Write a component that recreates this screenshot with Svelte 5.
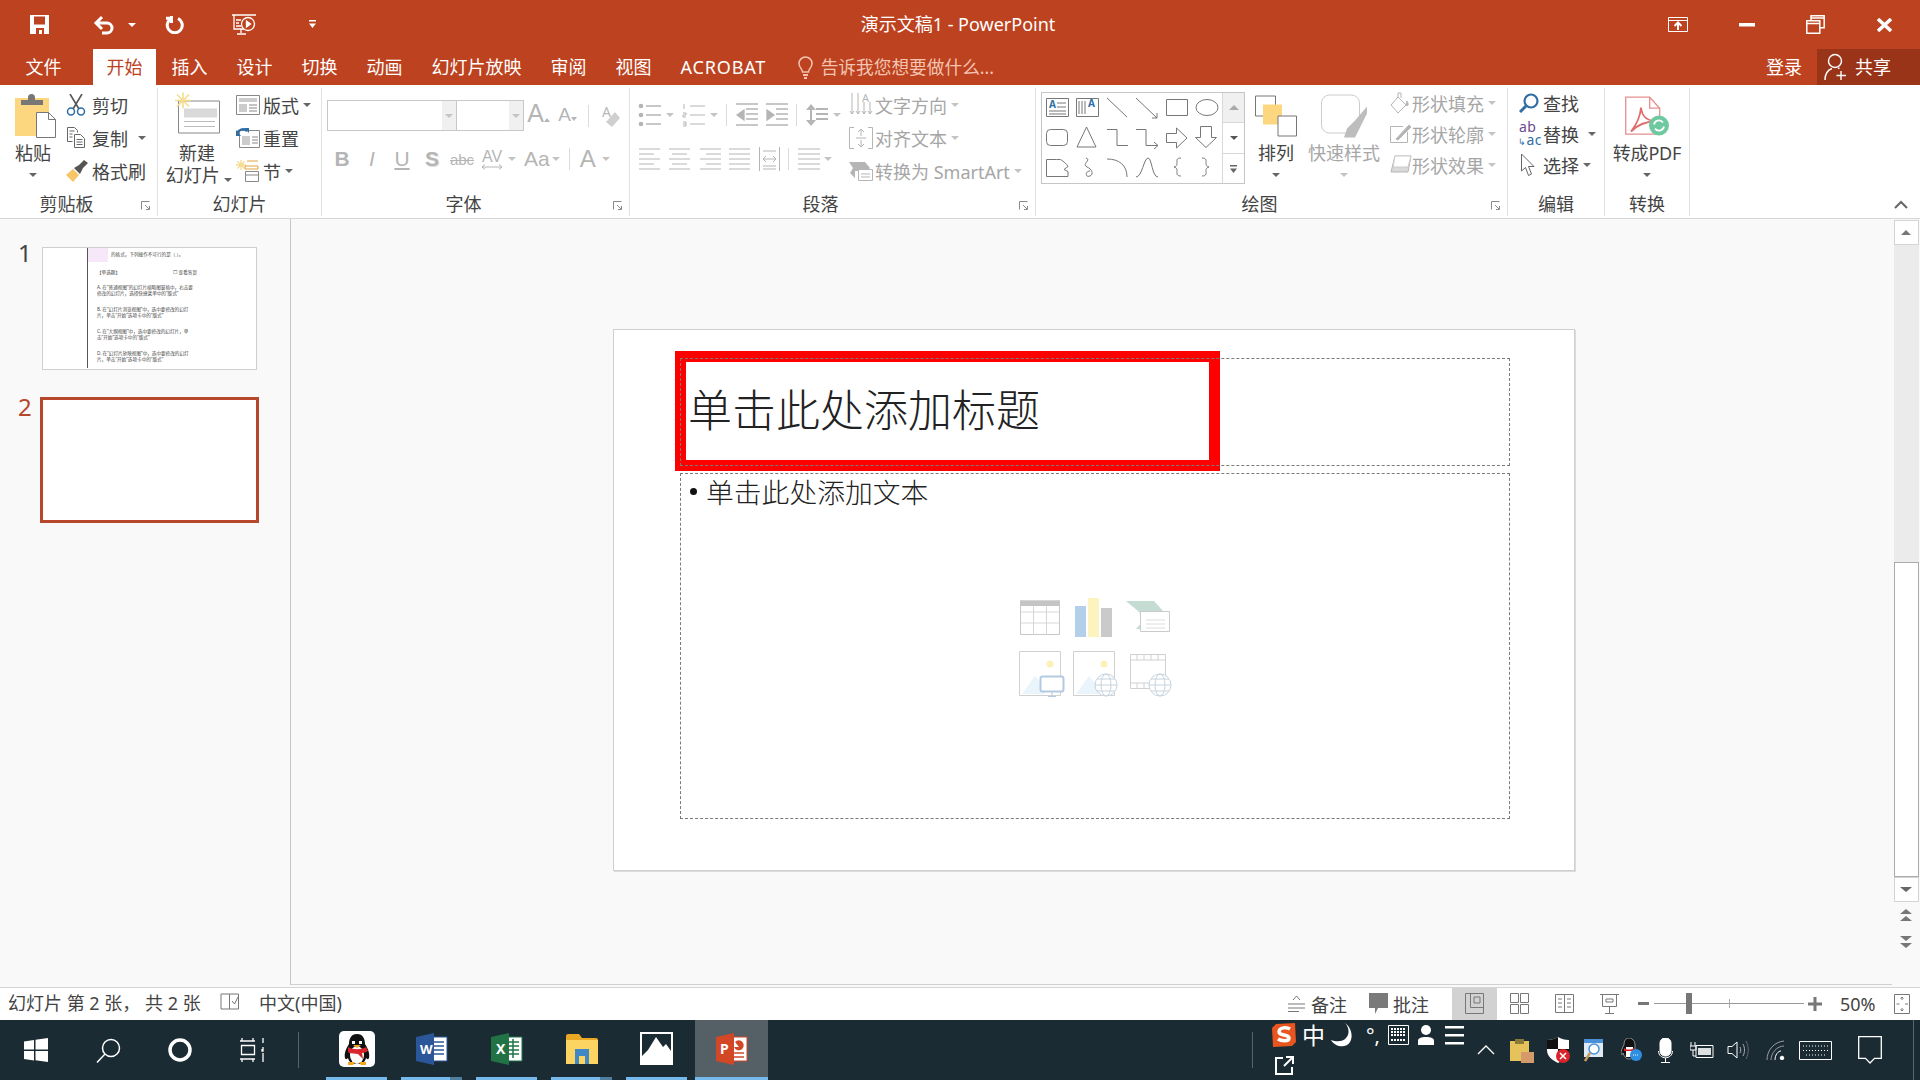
<script>
	const tabs = ['插入', '设计', '切换', '动画', '幻灯片放映', '审阅', '视图', 'ACROBAT'];
	const answers = [
		['A. 在“普通视图”的幻灯片缩略图窗格中，右击要', '修改的幻灯片，选择快捷菜单中的“版式”'],
		['B. 在“幻灯片浏览视图”中，选中要修改的幻灯', '片，单击“开始”选项卡中的“版式”'],
		['C. 在“大纲视图”中，选中要修改的幻灯片，单', '击“开始”选项卡中的“版式”'],
		['D. 在“幻灯片放映视图”中，选中要修改的幻灯', '片，单击“开始”选项卡中的“版式”']
	];
</script>

{#snippet launcher()}
	<svg class="launcher" width="24" height="12" viewBox="0 0 24 12" fill="none" stroke="#8a8a8a">
		<path d="M8.5 9.5v-8h8M12 5l4 4M13 9.5h3.5V6" />
	</svg>
{/snippet}

<div class="app">
	<header class="titlebar">
		<div class="qat">
			<svg width="19" height="19" viewBox="0 0 19 19"><path d="M0 0h19v19H0z" fill="#fff" /><path d="M4 1.500h11v8H4zM6 13h8v6h-2v-4H9v4H6z" fill="#bd421f" /></svg>
			<svg width="21" height="20" viewBox="0 0 21 20" fill="none" stroke="#fff" stroke-width="3"><path d="M9 2 3 8l6 6M4 8h10a5 5 0 0 1 0 10H9" /></svg>
			<i class="dd white"></i>
			<svg width="19" height="19" viewBox="0 0 19 19" fill="none" stroke="#fff" stroke-width="3"><path d="M6.500 3.500a7.500 7.500 0 1 0 6.500 0M6.500 1v7M1 3.200h6" /></svg>
			<svg width="24" height="21" viewBox="0 0 24 21" fill="none" stroke="#fff" stroke-width="1.300"><path d="M0 1h24M2 1v14h10M9 15v4M5 20h9M4 6h5M4 9h3M4 12h5" /><circle cx="16" cy="10" r="6.500" /><path d="M14.500 7v6l4-3z" fill="#fff" /></svg>
			<svg width="10" height="9" viewBox="0 0 10 9" fill="#fff"><path d="M1 0h7v1.500H1zM1 3.500h7L4.500 8z" /></svg>
		</div>
		<div class="doc-title">演示文稿1 - PowerPoint</div>
		<div class="win-btns">
			<svg width="20" height="15" viewBox="0 0 20 15" fill="none" stroke="#fff"><path d="M.5.500h19v14H.5zM.5 3.500h19" /><path d="M10 13V6M6.500 9 10 5.500 13.500 9" stroke-width="2" /></svg>
			<svg width="16" height="4" viewBox="0 0 16 4"><path d="M0 0h16v3.500H0z" fill="#fff" /></svg>
			<svg width="19" height="19" viewBox="0 0 19 19" fill="none" stroke="#fff" stroke-width="1.500"><path d="M.8 5.800h13v12.500H.8zM.8 8.500h13M5 5.500V.8h13.200v12H14M5 3h13" /></svg>
			<svg width="15" height="14" viewBox="0 0 15 14" fill="none" stroke="#fff" stroke-width="3.400"><path d="m1 1 13 12M14 1 1 13" /></svg>
		</div>
	</header>

	<nav class="tabbar">
		<span class="tab file">文件</span>
		<span class="tab active">开始</span>
		{#each tabs as t}
			<span class="tab" class:latin={t === 'ACROBAT'}>{t}</span>
		{/each}
		<svg class="bulb" width="15" height="23" viewBox="0 0 15 23" fill="none" stroke="#f3c4b1" stroke-width="1.500"><path d="M4.500 16c0-3-3.500-4.500-3.500-8.500a6.500 6.500 0 0 1 13 0c0 4-3.500 5.500-3.500 8.500z" /><path d="M5 19h5M6 22h3" stroke-width="2" /></svg>
		<span class="tell">告诉我您想要做什么...</span>
		<span class="login">登录</span>
		<span class="share">
			<svg width="24" height="28" viewBox="0 0 24 28" fill="none" stroke="#fff" stroke-width="1.400"><circle cx="11" cy="8" r="6.500" /><path d="M1 27c0-6 3-10 7-11.500M14 15l1.500.500M17 18v9M12.500 22.500H22" /></svg>
			共享
		</span>
	</nav>

	<section class="ribbon">
		<div class="group g-clip">
			<div class="body">
				<div class="big w66">
					<svg class="paste" width="41" height="44" viewBox="0 0 41 44"><path d="M0 4h34v38H0z" fill="#fcd77f" /><path d="M6 11V6h7V3.500a3.500 3.500 0 0 1 7 0V6h8v5z" fill="#777" /><path d="M21.500 18.500h12l7 7v18h-19z" fill="#fff" stroke="#777" /><path d="M33.500 18.500v7h7" fill="none" stroke="#777" /></svg>
					<span class="big-label">粘贴</span>
					<span class="big-dd"><i class="dd"></i></span>
				</div>
				<div class="rows">
					<div class="row">
						<svg width="20" height="22" viewBox="0 0 20 22" fill="none"><path d="M4 0 13 15M16 0 7 15" stroke="#555" stroke-width="1.600" /><circle cx="5" cy="17.500" r="3.500" stroke="#2f6ea5" stroke-width="1.500" /><circle cx="15" cy="17.500" r="3.500" stroke="#2f6ea5" stroke-width="1.500" /></svg>
						<span>剪切</span>
					</div>
					<div class="row">
						<svg width="20" height="21" viewBox="0 0 20 21" fill="none" stroke="#666"><path d="M1.500.500h7l3 3v2M1.500.500v14h5M3.500 4h5M3.500 7h3M3.500 10h3" /><path d="M8.500 7.500h6l4 4v9h-10zM10.500 12.500h6M10.500 15h6M10.500 17.500h6" /></svg>
						<span>复制</span><i class="dd gap10"></i>
					</div>
					<div class="row">
						<svg width="22" height="22" viewBox="0 0 22 22"><path d="M7 9l6 6-6 7-7-7z" fill="#f6c667" /><path d="M8 8l5-3 5-5 4 3-5 5-3 6z" fill="#555" /></svg>
						<span>格式刷</span>
					</div>
				</div>
			</div>
			<div class="glabel"><span>剪贴板</span>{@render launcher()}</div>
		</div>

		<div class="group g-slides">
			<div class="body">
				<div class="big w78">
					<svg class="newslide" width="46" height="41" viewBox="0 0 46 41"><path d="M4.500 8.500h41v32h-41z" fill="#fff" stroke="#888" /><path d="M10 16h33v9H10z" fill="#d9d9d9" /><path d="M10 29h31M10 34h31" stroke="#bbb" /><path d="M9 0v16M1 8h16M3 2l12 12M15 2 3 14" stroke="#f6dc8e" stroke-width="1.600" /></svg>
					<span class="big-label">新建</span>
					<span class="big-label second">幻灯片 <i class="dd"></i></span>
				</div>
				<div class="rows">
					<div class="row">
						<svg width="24" height="20" viewBox="0 0 24 20" fill="none" stroke="#888"><path d="M.5.500h23v19H.5z" /><path d="M3 3h18v4H3zM3 9h8v8H3z" fill="#ccc" stroke="none" /><path d="M13 10h8M13 13h8M13 16h8" /></svg>
						<span>版式</span><i class="dd gap4"></i>
					</div>
					<div class="row">
						<svg width="24" height="21" viewBox="0 0 24 21" fill="none" stroke="#888"><path d="M3.500 3.500h20v17h-20z" fill="#fff" /><path d="M6 9h8v9H6z" fill="#ccc" stroke="none" /><path d="M16 10h6M16 13h6M16 16h6" /><path d="M1 7a6 6 0 0 1 10-3" stroke="#2f6ea5" stroke-width="2.500" /><path d="M0 3l5 6H0zM8 1h5v5z" fill="#2f6ea5" stroke="none" /></svg>
						<span>重置</span>
					</div>
					<div class="row">
						<svg width="24" height="22" viewBox="0 0 24 22" fill="none"><path d="M5 0v10M0 5h10M1.500 1.500l7 7M8.500 1.500l-7 7" stroke="#f6dc8e" stroke-width="1.300" /><path d="M11 1h11M9 6h13v3H9z" stroke="#e2a23a" /><path d="M9.500 11.500h13v10h-13zM9.500 15h13" stroke="#888" /></svg>
						<span>节</span><i class="dd gap4"></i>
					</div>
				</div>
			</div>
			<div class="glabel"><span>幻灯片</span></div>
		</div>

		<div class="group g-font off">
			<div class="body column">
				<div class="font-row">
					<div class="combo name"><span class="drop"><i class="dd off"></i></span></div>
					<div class="combo size"><span class="drop"><i class="dd off"></i></span></div>
					<span class="fbtn grow">A<i class="up"></i></span>
					<span class="fbtn shrink">A<i class="down"></i></span>
					<span class="vsep"></span>
					<svg class="clear" width="20" height="24" viewBox="0 0 20 24"><text x="1" y="13" font-size="14" fill="#b8b8b8" font-family="Noto Sans">A</text><path d="M14 8l5 6-8 9-6-5z" fill="#cfcfcf" /></svg>
				</div>
				<div class="style-row">
					<b>B</b><em>I</em><u>U</u><b class="shadowed">S</b><s>abc</s>
					<span class="av">AV<svg width="22" height="6" viewBox="0 0 22 6" fill="none" stroke="#b5b5b5"><path d="M1 3h20M4 .500 1 3l3 2.500M18 .500 21 3l-3 2.500" /></svg></span>
					<i class="dd off"></i>
					<span class="aa">Aa</span><i class="dd off"></i>
					<span class="vsep"></span>
					<span class="color-a">A</span><i class="dd off"></i>
				</div>
			</div>
			<div class="glabel"><span>字体</span>{@render launcher()}</div>
		</div>

		<div class="group g-para off">
			<div class="body">
				<div class="para-left">
					<div class="para-row one">
						<svg width="23" height="24" viewBox="0 0 23 24" fill="none" stroke="#b5b5b5" stroke-width="1.500"><path d="M8 3h15M8 12h15M8 21h15" /><circle cx="3" cy="3" r="1.600" fill="#b5b5b5" /><circle cx="3" cy="12" r="1.600" fill="#b5b5b5" /><circle cx="3" cy="21" r="1.600" fill="#b5b5b5" /></svg>
						<i class="dd off"></i>
						<svg width="23" height="24" viewBox="0 0 23 24" fill="none" stroke="#b5b5b5" stroke-width="1.500"><path d="M8 3h15M8 12h15M8 21h15M2 1v5M1 10h3v2H1v2h3M1 19h3v4H1M1 21h3" stroke-width="1" /></svg>
						<i class="dd off"></i>
						<span class="vsep"></span>
						<svg width="22" height="24" viewBox="0 0 22 24" fill="none" stroke="#b5b5b5" stroke-width="1.300"><path d="M0 1h22M10 6h12M10 11h12M10 16h12M0 22h22" /><path d="M8 7v10L1 12z" fill="#b5b5b5" /></svg>
						<svg width="22" height="24" viewBox="0 0 22 24" fill="none" stroke="#b5b5b5" stroke-width="1.300"><path d="M0 1h22M10 6h12M10 11h12M10 16h12M0 22h22" /><path d="M1 7v10l7-5z" fill="#b5b5b5" /></svg>
						<span class="vsep"></span>
						<svg width="22" height="24" viewBox="0 0 22 24" fill="none" stroke="#b5b5b5" stroke-width="1.300"><path d="M10 6h12M10 11h12M10 16h12M5 3v18" stroke-width="2" /><path d="M0 7l5-6 5 6zM0 17l5 6 5-6z" fill="#b5b5b5" stroke="none" /></svg>
						<i class="dd off"></i>
					</div>
					<div class="para-row two">
						<svg width="21" height="22" viewBox="0 0 21 22" stroke="#b5b5b5"><path d="M0 1h21M0 6h15M0 11h21M0 16h15M0 21h21" /></svg>
						<svg width="21" height="22" viewBox="0 0 21 22" stroke="#b5b5b5"><path d="M0 1h21M3 6h15M0 11h21M3 16h15M0 21h21" /></svg>
						<svg width="21" height="22" viewBox="0 0 21 22" stroke="#b5b5b5"><path d="M0 1h21M6 6h15M0 11h21M6 16h15M0 21h21" /></svg>
						<svg width="21" height="22" viewBox="0 0 21 22" stroke="#b5b5b5"><path d="M0 1h21M0 6h21M0 11h21M0 16h21M0 21h21" /></svg>
						<svg width="21" height="24" viewBox="0 0 21 24" fill="none" stroke="#b5b5b5"><path d="M.500 0v24M20.500 0v24M4 12h13M7 9l-3 3 3 3M14 9l3 3-3 3M4 4h13M4 19h13M4 22h13" /></svg>
						<span class="vsep"></span>
						<svg width="22" height="22" viewBox="0 0 22 22" stroke="#b5b5b5"><path d="M0 1h22M0 6h22M0 11h22M0 16h22M0 21h22" /></svg>
						<i class="dd off"></i>
					</div>
				</div>
				<div class="rows para-right">
					<div class="row dim">
						<svg width="24" height="26" viewBox="0 0 24 26" fill="none" stroke="#b5b5b5"><path d="M3 1v21M9 1v21M15 10v12M21 10v12M1 19l2 3 2-3M7 19l2 3 2-3M13 19l2 3 2-3M19 19l2 3 2-3" /><text x="13" y="10" font-size="11" fill="#b5b5b5" stroke="none" font-family="Noto Sans">A</text></svg>
						<span>文字方向</span><i class="dd off gap4"></i>
					</div>
					<div class="row dim">
						<svg width="24" height="22" viewBox="0 0 24 22" fill="none" stroke="#b5b5b5"><path d="M5 .500H.5v21H5M19 .500h4.500v21H19M12 2v7M9 5l3-3 3 3M12 20v-7M9 17l3 3 3-3M7 11h10" /></svg>
						<span>对齐文本</span><i class="dd off gap4"></i>
					</div>
					<div class="row dim">
						<svg width="24" height="20" viewBox="0 0 24 20"><path d="M0 1h16l5 6-3 3H6v7L1 12l3-5z" fill="#b5b5b5" /><path d="M9.500 8.500h14v11h-14zM12 13h9M12 16h9" fill="#fff" stroke="#b5b5b5" /></svg>
						<span>转换为 SmartArt</span><i class="dd off gap4"></i>
					</div>
				</div>
			</div>
			<div class="glabel"><span>段落</span>{@render launcher()}</div>
		</div>

		<div class="group g-draw">
			<div class="body">
				<div class="gallery">
					<svg width="180" height="90" viewBox="0 0 180 90" fill="none" stroke="#777">
						<path d="M4.500 5.500h22v18h-22zM15 10h9M15 14h9M7 18h17M7 21h17" />
						<text x="7" y="15" font-size="10" font-weight="700" fill="#2f6ea5" stroke="none" font-family="Noto Sans">A</text>
						<path d="M34.500 5.500h22v18h-22zM37 8v13M40 8v13M43 8v13" />
						<text x="46" y="14" font-size="10" font-weight="700" fill="#2f6ea5" stroke="none" font-family="Noto Sans">A</text>
						<path d="m65 5 20 19M94 5l21 20M115 20v5h-5" />
						<path d="M124.500 6.500h21v16h-21z" />
						<ellipse cx="165" cy="14.500" rx="11" ry="8" />
						<rect x="4.500" y="36.500" width="21" height="16" rx="4" />
						<path d="M44.500 34 54 54H35zM65 36.500h10v16h11M94 36.500h10v16h12M112 49l4 3.500-4 3.500" />
						<path d="M124.500 40.500h10V35l10.500 10-10.500 10v-5.500h-10zM158.500 33.500h11v11h5L164 54.500 153.500 44.500h5z" />
						<path d="M4.500 66.500h10l4 0c3 2 6 4 7.500 7l-4 3 4 2v5h-21.500zM44 65c6 2-5 6 1 9 5 2 7 7 3 9-5 2-5-5 0-5" />
						<path d="M65 66c12 0 20 6 20 18M94 84c6 0 8-19 12-19s4 19 10 19" />
						<path d="M139 65c-5 0-4 3-4 5s0 3-3 4c3 1 3 2 3 4s-1 5 4 5M160 65c5 0 4 3 4 5s0 3 3 4c-3 1-3 2-3 4s1 5-4 5" />
					</svg>
					<div class="gal-scroll">
						<span class="top"><i class="tri-up"></i></span>
						<span><i class="dd dark"></i></span>
						<span class="more"><svg width="9" height="9" viewBox="0 0 9 9" fill="#666"><path d="M1 0h7v1.500H1zM1 3.500h7L4.500 8z" /></svg></span>
					</div>
				</div>
				<div class="big w62">
					<svg width="42" height="41" viewBox="0 0 42 41"><path d="M.5.500h20v20H.5z" fill="#fff" stroke="#777" /><path d="M8 9h19v20H8z" fill="#fcd77f" /><path d="M23 20.500h18.500v20H23z" fill="#fff" stroke="#777" /></svg>
					<span class="big-label">排列</span>
					<span class="big-dd"><i class="dd"></i></span>
				</div>
				<div class="big w74 dim">
					<svg width="46" height="43" viewBox="0 0 46 43"><rect x=".5" y=".5" width="38" height="38" rx="8" fill="#fff" stroke="#ccc" /><path d="M46 12 34 26l-8 8-3 9h11l5-10 7-14z" fill="#bdbdbd" /></svg>
					<span class="big-label">快速样式</span>
					<span class="big-dd"><i class="dd off"></i></span>
				</div>
				<div class="rows shape-rows">
					<div class="row dim">
						<svg width="19" height="22" viewBox="0 0 19 22" fill="none" stroke="#b5b5b5"><path d="M8 5 1 13l7 8 8-8zM8 5V1h3v5" /><path d="M17 9c1 2 2 4 0 5-1-1-1-3 0-5z" fill="#b5b5b5" /></svg>
						<span>形状填充</span><i class="dd off gap4"></i>
					</div>
					<div class="row dim">
						<svg width="22" height="21" viewBox="0 0 22 21" fill="none" stroke="#b5b5b5"><path d="M13 3.500H.5v16h17V9" /><path d="M6 16 19 2l2 2L8 17z" fill="#b5b5b5" /></svg>
						<span>形状轮廓</span><i class="dd off gap4"></i>
					</div>
					<div class="row dim">
						<svg width="22" height="21" viewBox="0 0 22 21"><path d="M5 2h16l-3 16H1z" fill="#d9d9d9" stroke="#b5b5b5" /><path d="M5 2h16l-3 11H3z" fill="#fff" stroke="#ccc" /></svg>
						<span>形状效果</span><i class="dd off gap4"></i>
					</div>
				</div>
			</div>
			<div class="glabel"><span>绘图</span>{@render launcher()}</div>
		</div>

		<div class="group g-edit">
			<div class="body">
				<div class="rows">
					<div class="row">
						<svg width="20" height="20" viewBox="0 0 20 20" fill="none" stroke="#2f6ea5"><circle cx="12" cy="8" r="6.500" stroke-width="2.200" /><path d="M7 13 1 19" stroke-width="3" /></svg>
						<span>查找</span>
					</div>
					<div class="row">
						<span class="abac"><span class="ab">ab</span><span class="ac"><em>↳</em>ac</span></span>
						<span>替换</span><i class="dd gap9"></i>
					</div>
					<div class="row">
						<svg width="16" height="24" viewBox="0 0 16 24" fill="#fff" stroke="#666"><path d="M2.500 1v17l4-3.500 3 8 3-1.500-3-7.500H15z" /></svg>
						<span>选择</span><i class="dd gap4"></i>
					</div>
				</div>
			</div>
			<div class="glabel center"><span>编辑</span></div>
		</div>

		<div class="group g-conv">
			<div class="body">
				<div class="big w84">
					<svg width="44" height="39" viewBox="0 0 44 39" fill="none"><path d="M.7.700h24l10 11v26H.7z" fill="#fff" stroke="#e58f8f" stroke-width="1.300" /><path d="M24.700.700v11h10" stroke="#e58f8f" stroke-width="1.300" /><path d="M16 11c1 8 4 12 14 14-8 0-16 2-24 10 4-5 9-12 10-24z" stroke="#e06c6c" stroke-width="1.800" /><circle cx="34" cy="29" r="10" fill="#6fc9a0" /><path d="M29 28a5 5 0 0 1 9-2M39 30a5 5 0 0 1-9 2" stroke="#fff" stroke-width="1.700" /></svg>
					<span class="big-label pdf">转成PDF</span>
					<span class="big-dd"><i class="dd"></i></span>
				</div>
			</div>
			<div class="glabel center"><span>转换</span></div>
		</div>

		<svg class="collapse" width="14" height="9" viewBox="0 0 14 9" fill="none" stroke="#666" stroke-width="2"><path d="m1 8 6-6 6 6" /></svg>
	</section>

	<main class="workspace">
		<aside class="thumbs">
			<div class="thumb-row">
				<span class="num">1</span>
				<div class="thumb first">
					<div class="thumb-left"></div>
					<div class="thumb-page">
						<div class="q-head"><span class="pink"></span>的格式，下列操作不可行的是（ ）。</div>
						<div class="q-type"><span>【单选题】</span><span>☐ 查看答案</span></div>
						{#each answers as a}
							<p>{a[0]}<br />{a[1]}</p>
						{/each}
					</div>
				</div>
			</div>
			<div class="thumb-row second">
				<span class="num current">2</span>
				<div class="thumb selected"></div>
			</div>
		</aside>

		<div class="editor">
			<div class="slide">
				<div class="red-frame"></div>
				<div class="ph title-ph"><span>单击此处添加标题</span></div>
				<div class="ph body-ph"><span class="bullet"></span>单击此处添加文本</div>
				<svg class="ph-icons" width="156" height="100" viewBox="0 0 156 100" fill="none">
					<path d="M1 3h40v6H1z" fill="#c4c4c4" />
					<path d="M1.500 3.500h39v34h-39zM1.500 15h39M1.500 26h39M14.500 9v28M27.500 9v28" stroke="#d6d6d6" />
					<path d="M1.500 3.500v34h39v-34" stroke="#c8c8c8" />
					<path d="M56 9h11v31H56z" fill="#b4cfe9" /><path d="M69 1h11v39H69z" fill="#fdf3be" /><path d="M82 11h11v29H82z" fill="#cacaca" />
					<path d="M107 4h28l9 10-9 10h-10v8h-8l9-10-7-8z" fill="#c4dcd2" />
					<path d="M121.500 14.500h29v20h-29z" fill="#fff" stroke="#cacaca" />
					<path d="M127 23h19M127 27h19M127 31h19" stroke="#dcdcdc" />
					<path d="M.5 54.500h41v44H.5zM54.500 54.500h41v44h-41z" stroke="#d0d0d0" />
					<circle cx="31" cy="67" r="3.500" fill="#fdf0b8" /><circle cx="85" cy="67" r="3.500" fill="#fdf0b8" />
					<path d="M3 97l13-18 10 12v6zM57 97l13-18 10 12v6z" fill="#e9f5fb" />
					<rect x="21.500" y="79.500" width="23" height="15" rx="2" fill="#fff" stroke="#b4c9e2" stroke-width="2" />
					<path d="M33 95v4M29 99.500h8" stroke="#b4c9e2" />
					<circle cx="87" cy="88" r="11" fill="#fff" stroke="#c6d4de" /><ellipse cx="87" cy="88" rx="5" ry="11" stroke="#c6d4de" /><path d="M76 88h22M78 82h18M78 94h18" stroke="#c6d4de" />
					<path d="M111.500 57.500h35v34h-35zM111.500 63h35M111.500 86h35M118 57.500V63M125 57.500V63M132 57.500V63M139 57.500V63M118 86v6M125 86v6" stroke="#d0d0d0" />
					<circle cx="141" cy="88" r="11" fill="#fff" stroke="#c6d4de" /><ellipse cx="141" cy="88" rx="5" ry="11" stroke="#c6d4de" /><path d="M130 88h22M132 82h18M132 94h18" stroke="#c6d4de" />
				</svg>
			</div>
		</div>

		<div class="vscroll">
			<span class="sbtn"><i class="tri-up"></i></span>
			<span class="track"></span>
			<span class="sthumb"></span>
			<span class="sbtn down"><i class="dd big-tri"></i></span>
			<svg class="page" width="14" height="14" viewBox="0 0 14 14" fill="#777"><path d="M7 0l6 5H1zM7 7l6 5H1z" /></svg>
			<svg class="page" width="14" height="14" viewBox="0 0 14 14" fill="#777"><path d="M1 1h12L7 6zM1 8h12l-6 5z" /></svg>
		</div>
	</main>

	<footer class="statusbar">
		<span class="pos">幻灯片 第 2 张， 共 2 张</span>
		<svg class="spell" width="21" height="20" viewBox="0 0 21 20" fill="none" stroke="#777"><path d="M10.500 2H2v15h8.500zM10.500 2h9v15h-9M13 9l2.500 3L19 5" /></svg>
		<span class="lang">中文(中国)</span>
		<span class="status-right">
			<svg width="17" height="17" viewBox="0 0 17 17" fill="none" stroke="#777"><path d="M0 9h17M0 13h17M0 16.500h11M5 5l3.500-4L12 5" /></svg>
			<span class="notes">备注</span>
			<svg class="c-ico" width="19" height="22" viewBox="0 0 19 22"><path d="M0 0h19v15H9l-3 6v-6H0z" fill="#7a7a7a" /></svg>
			<span class="comments">批注</span>
			<span class="view on"><svg width="19" height="21" viewBox="0 0 19 21" fill="none" stroke="#777"><path d="M.5.500h18v20H.5zM5.500.500v14h13M9 4h6v6H9z" /></svg></span>
			<span class="view"><svg width="19" height="21" viewBox="0 0 19 21" fill="none" stroke="#777"><path d="M.5.500h8v9h-8zM10.500.500h8v9h-8zM.5 11.500h8v9h-8zM10.500 11.500h8v9h-8z" /></svg></span>
			<span class="view"><svg width="19" height="21" viewBox="0 0 19 21" fill="none" stroke="#777"><path d="M.5 1.500h18v18H.5zM9.500 1.500v18M3 6h4M3 10h4M3 14h4M12 6h4M12 10h4M12 14h4" /></svg></span>
			<span class="view"><svg width="19" height="21" viewBox="0 0 19 21" fill="none" stroke="#777"><path d="M0 1.500h19M2.500 1.500v12h14v-12M9.500 13.500v7M5 20.500h9M6 6h7v3H6z" /></svg></span>
			<svg class="minus" width="11" height="3" viewBox="0 0 11 3"><path d="M0 0h11v3H0z" fill="#777" /></svg>
			<span class="slider"><i class="knob"></i><i class="tick"></i></span>
			<svg class="plus" width="14" height="14" viewBox="0 0 14 14"><path d="M5.500 0h3v5.500H14v3H8.500V14h-3V8.500H0v-3h5.500z" fill="#777" /></svg>
			<span class="zoom">50%</span>
			<svg class="fit" width="16" height="20" viewBox="0 0 16 20" fill="none" stroke="#777"><path d="M.5.500h15v19H.5zM8 3v3M6.500 4.500 8 3l1.500 1.500M8 17v-3M6.500 15.500 8 17l1.500-1.500M2.500 10h3M11 10h3" /></svg>
		</span>
	</footer>

	<div class="taskbar">
		<span class="sys">
			<svg width="24" height="24" viewBox="0 0 24 24" fill="#fff"><path d="M0 3.500 10 2v9.500H0zM11.500 1.800 24 0v11.500H11.500zM0 13h10v9.500L0 21zM11.500 13H24v11l-12.500-1.800z" /></svg>
		</span>
		<span class="sys">
			<svg width="25" height="25" viewBox="0 0 25 25" fill="none" stroke="#fff" stroke-width="1.500"><circle cx="15" cy="10" r="8.500" /><path d="M9 16 1 24.500" /></svg>
		</span>
		<span class="sys">
			<svg width="24" height="24" viewBox="0 0 24 24" fill="none"><circle cx="12" cy="12" r="10" stroke="#fff" stroke-width="3.500" /></svg>
		</span>
		<span class="sys">
			<svg width="24" height="24" viewBox="0 0 24 24" fill="none" stroke="#fff" stroke-width="1.300"><path d="M0 3h15M2 0v3M13 0v3M1.500 7.500h13v9h-13zM0 21h15M2 21v3M13 21v3M23 0v5M23 9v4h-1v-2M23 15v9" /></svg>
		</span>
		<span class="tb-sep"></span>
		<div class="tasks">
			<span class="task">
				<svg width="36" height="36" viewBox="0 0 36 36"><rect width="36" height="36" rx="5" fill="#fff" /><path d="M18 3c-6 0-8 5-8 10-3 5-5 9-4 14 1 2 2 1 3 0 1 4 4 6 9 6s8-2 9-6c1 1 2 2 3 0 1-5-1-9-4-14 0-5-2-10-8-10z" fill="#111" /><ellipse cx="18" cy="24" rx="7" ry="9" fill="#fff" /><path d="M9 16c5 3 13 3 18 0l2 4c-2 1-4 2-6 2l1 6-5-5-9-1c-1 0-1-4-1-6z" fill="#d8242a" /><path d="M13 10h3v3h-3zM20 10h3v3h-3z" fill="#fff" /><path d="M14 14h8l-4 3z" fill="#f4a71d" /><path d="M9 31h7l-2 3H9zM20 31h7v3h-5z" fill="#f4a71d" /></svg>
			</span>
			<span class="task stacked">
				<svg width="32" height="32" viewBox="0 0 32 32"><path d="M14 4h17v24H14z" fill="#fff" stroke="#2b579a" /><path d="M17 9h11M17 13h11M17 17h11M17 21h11" stroke="#2b579a" stroke-width="1.500" /><path d="M0 4l18-4v32L0 28z" fill="#2b579a" /><text x="4" y="21" font-size="13" font-weight="700" fill="#fff" font-family="Noto Sans">W</text></svg>
			</span>
			<span class="task">
				<svg width="32" height="32" viewBox="0 0 32 32"><path d="M14 4h17v24H14z" fill="#fff" stroke="#217346" /><path d="M17 9h11M17 13h11M17 17h11M17 21h11M22 6v19" stroke="#217346" stroke-width="1.500" /><path d="M0 4l18-4v32L0 28z" fill="#217346" /><text x="5" y="21" font-size="14" font-weight="700" fill="#fff" font-family="Noto Sans">X</text></svg>
			</span>
			<span class="task stacked">
				<svg width="32" height="30" viewBox="0 0 32 30"><path d="M0 2a2 2 0 0 1 2-2h11l3 4h14a2 2 0 0 1 2 2v22H0z" fill="#e9a825" /><path d="M0 6h32v24H0z" fill="#fcd462" /><path d="M9 15h14v15h-4v-8h-6v8H9z" fill="#3f88c5" /></svg>
			</span>
			<span class="task">
				<svg width="33" height="33" viewBox="0 0 33 33"><path d="M0 0h33v33H0z" fill="#fff" /><path d="M2 2h29v17l-5-7-3 3-7-10-8 13-6 6z" fill="#1a2b33" /></svg>
			</span>
			<span class="task active-task">
				<svg width="32" height="32" viewBox="0 0 32 32"><path d="M14 4h17v24H14z" fill="#fff" stroke="#d24726" /><path d="M19 9a5 5 0 1 1-1 5h5z" fill="#d24726" /><path d="M18 20h10M18 24h10" stroke="#d24726" stroke-width="1.500" /><path d="M0 4l18-4v32L0 28z" fill="#d24726" /><text x="4" y="21" font-size="14" font-weight="700" fill="#fff" font-family="Noto Sans">P</text></svg>
			</span>
		</div>
		<span class="tb-sep two"></span>
		<div class="ime">
			<div class="ime-row">
				<svg width="24" height="24" viewBox="0 0 24 24"><path d="M4 1 23 0l1 19-4 4-19 1L0 5z" fill="#e8551f" /><path d="M18 6c-3-2-11-2-11 3 0 4 10 2 10 6 0 4-8 3-11 1" fill="none" stroke="#fff" stroke-width="3.500" /></svg>
				<span class="zh">中</span>
				<svg class="moon" width="22" height="25" viewBox="0 0 22 25"><path d="M14 0c4 4 5 11 1 15-3 4-10 4-15 2 4 7 15 9 19 2 4-7 0-16-5-19z" fill="#fff" /></svg>
				<span class="punct">°,</span>
				<svg class="kbd" width="21" height="20" viewBox="0 0 21 20" fill="none" stroke="#fff"><path d="M.5.500h20v19H.5z" /><path d="M3 4h15M3 7h15M3 10h15M3 15h15" stroke-width="2" stroke-dasharray="2 1" /></svg>
				<svg class="person" width="16" height="20" viewBox="0 0 16 20" fill="#fff"><circle cx="8" cy="5" r="5" /><path d="M0 20v-4c0-3 3-4 8-4s8 1 8 4v4z" /></svg>
				<svg class="menu" width="19" height="19" viewBox="0 0 19 19" fill="#fff"><path d="M0 0h19v2.500H0zM0 8h19v2.500H0zM0 16h19v2.500H0z" /></svg>
			</div>
			<svg class="pop" width="19" height="19" viewBox="0 0 19 19" fill="none" stroke="#fff" stroke-width="2"><path d="M8 2H1v16h16v-7M9 10l8-8M11 1h7v7" /></svg>
		</div>
		<div class="tray">
			<svg width="18" height="10" viewBox="0 0 18 10" fill="none" stroke="#fff" stroke-width="1.300"><path d="m1 9 8-8 8 8" /></svg>
			<svg width="24" height="26" viewBox="0 0 24 26"><path d="M0 4h19v20H0z" fill="#e6c25a" /><path d="M5 2h9v5H5z" fill="#8a7a3a" /><path d="M11 15h13v11H11z" fill="#d49a6a" /></svg>
			<svg width="23" height="26" viewBox="0 0 23 26"><path d="M11 0c3 2 7 3 11 3v10c0 6-5 10-11 13C5 23 0 19 0 13V3c4 0 8-1 11-3z" fill="#fff" /><path d="M11 0v12H0V3c4 0 8-1 11-3zM11 12h11v1c0 3-1 5-3 7l-8-1z" fill="#111" /><circle cx="16" cy="19" r="7" fill="#d8242a" /><path d="m13 16 6 6M19 16l-6 6" stroke="#fff" stroke-width="1.500" /></svg>
			<svg width="19" height="24" viewBox="0 0 19 24"><path d="M0 1h19v18H0z" fill="#dfeaf5" /><path d="M0 1h19v4H0z" fill="#4a90d9" /><circle cx="10" cy="11" r="5" fill="#fff" stroke="#4a90d9" stroke-width="1.500" /><path d="M6 15 1 23" stroke="#c9975b" stroke-width="2.500" /></svg>
			<svg width="21" height="24" viewBox="0 0 21 24"><path d="M8 0c-4 0-5 4-5 7-2 3-3 6-3 9 1 1 2 0 2-1 1 3 3 6 6 6 4 0 5-3 6-6V7c0-3-2-7-6-7z" fill="#111" stroke="#fff" stroke-width=".5" /><path d="M5 9h7v10H5z" fill="#fff" /><path d="M3 10c3 2 7 2 10 0l1 3H3z" fill="#d8242a" /><circle cx="15" cy="17" r="6" fill="#2e8fe0" /><path d="M12 17h6" stroke="#fff" stroke-dasharray="1 1" /></svg>
			<svg width="15" height="25" viewBox="0 0 15 25" fill="none" stroke="#fff"><rect x="2" y="0" width="11" height="18" rx="5" fill="#fff" /><path d="M.5 13c0 9 14 9 14 0M7.500 20v4M3 24.500h9" /></svg>
			<svg width="24" height="17" viewBox="0 0 24 17" fill="none" stroke="#fff"><path d="M6 3.500h17v12H6zM1 0v4M5 0v4M0 4h6v4H0zM3 8v6h3" /><path d="M8 6h13v7H8z" fill="#fff" stroke="none" opacity=".85" /></svg>
			<svg width="22" height="22" viewBox="0 0 22 22" fill="none" stroke="#fff"><path d="M1 7.500h4L10 3v16l-5-4.500H1z" /><path d="M13 8c1 2 1 4 0 6M16 5c2 4 2 8 0 12" stroke="#aab" /><path d="M19 2c3 6 3 12 0 18" stroke="#667" /></svg>
			<svg width="19" height="20" viewBox="0 0 19 20" fill="none" stroke="#fff"><path d="M1 20c0-10 7-18 17-19M5 20c0-7 6-14 13-14" stroke="#99a" /><path d="M9 20c0-5 3-9 6-9" /><circle cx="16" cy="18" r="1.800" fill="#fff" /></svg>
			<svg width="33" height="19" viewBox="0 0 33 19" fill="none" stroke="#fff"><path d="M.5.500h32v18H.5z" /><path d="M4 5h25M4 9.500h25M7 14h19" stroke-dasharray="1 2" /></svg>
			<svg width="24" height="28" viewBox="0 0 24 28" fill="none" stroke="#fff" stroke-width="1.300"><path d="M.7.700h22.600v21.600h-6.800L12 27l-4.500-4.700H.7z" /></svg>
		</div>
		<span class="desk-line"></span>
	</div>
</div>

<style>
	:global(body) {
		margin: 0;
		overflow: hidden;
		background: #fff;
	}
	.app {
		width: 1920px;
		height: 1080px;
		display: flex;
		flex-direction: column;
		font-family: 'Noto Sans', 'Noto Sans CJK SC', sans-serif;
		font-size: 18px;
		color: #444;
		overflow: hidden;
	}
	.app svg {
		flex: none;
		display: block;
	}

	/* small dropdown triangle */
	.dd {
		display: inline-block;
		flex: none;
		width: 0;
		height: 0;
		border-left: 4px solid transparent;
		border-right: 4px solid transparent;
		border-top: 4px solid #666;
	}
	.dd.white {
		border-top-color: #fff;
	}
	.dd.off {
		border-top-color: #c4c4c4;
	}
	.dd.dark {
		border-top-color: #555;
	}
	.gap4 {
		margin-left: 4px;
	}
	.gap9 {
		margin-left: 9px;
	}
	.gap10 {
		margin-left: 10px;
	}
	.tri-up {
		display: block;
		width: 0;
		height: 0;
		border-left: 5px solid transparent;
		border-right: 5px solid transparent;
		border-bottom: 5px solid #aaa;
	}

	.titlebar {
		height: 49px;
		flex: none;
		background: #bd421f;
		color: #fff;
		display: grid;
		grid-template-columns: 1fr auto 1fr;
		align-items: center;
	}
	.qat {
		display: grid;
		grid-template-columns: 63px 35px 37px 67px 76px auto;
		justify-content: start;
		justify-items: start;
		align-items: center;
		padding-left: 30px;
	}
	.doc-title {
		margin-left: -4px;
		line-height: 49px;
	}
	.win-btns {
		display: grid;
		grid-template-columns: 71px 67px 71px auto;
		justify-items: start;
		align-items: center;
		justify-content: end;
		padding-right: 28px;
	}

	.tabbar {
		height: 36px;
		flex: none;
		background: #bd421f;
		color: #fff;
		display: flex;
		align-items: stretch;
		line-height: 36px;
	}
	.tab {
		padding: 0 14.5px;
		white-space: nowrap;
	}
	.tab.latin {
		letter-spacing: 0.85px;
	}
	.tab.file {
		margin-left: 12px;
		margin-right: 18px;
		padding: 0 13.500px;
	}
	.tab.active {
		width: 63px;
		box-sizing: border-box;
		padding: 0 13.500px;
		margin-right: 1px;
		background: #fff;
		color: #bd421f;
	}
	.bulb {
		margin: 7px 0 0 17px;
	}
	.tell {
		margin-left: 8px;
		color: #f3c4b1;
		font-size: 17.700px;
	}
	.login {
		margin-left: auto;
		padding-right: 15px;
	}
	.share {
		width: 103px;
		box-sizing: border-box;
		background: #9a3418;
		display: flex;
		align-items: center;
		gap: 7px;
		padding-left: 7px;
	}

	.ribbon {
		height: 134px;
		flex: none;
		box-sizing: border-box;
		background: #fff;
		display: flex;
		border-bottom: 1px solid #d6d6d6;
		padding-top: 3px;
		position: relative;
	}
	.group {
		height: 128px;
		box-sizing: border-box;
		border-right: 1px solid #e2e2e2;
		display: flex;
		flex-direction: column;
	}
	.g-clip {
		width: 158px;
		--ic: 26px;
	}
	.g-slides {
		width: 164px;
		--ic: 27px;
	}
	.g-font {
		width: 308px;
	}
	.g-para {
		width: 406px;
		--ic: 26px;
	}
	.g-draw {
		width: 472px;
		--ic: 22px;
	}
	.g-edit {
		width: 97px;
		--ic: 24px;
	}
	.g-conv {
		width: 85px;
	}
	.body {
		height: 105px;
		flex: none;
		display: flex;
	}
	.body.column {
		flex-direction: column;
	}
	.glabel {
		height: 22px;
		line-height: 22px;
		display: flex;
		align-items: center;
	}
	.glabel span {
		flex: 1;
		text-align: center;
	}
	.launcher {
		margin-top: 3px;
	}

	.big {
		display: flex;
		flex-direction: column;
		align-items: center;
		padding-top: 6px;
		box-sizing: border-box;
		height: 105px;
		flex: none;
	}
	.big > svg {
		height: 44px;
		margin-bottom: 4px;
	}
	.big > svg.paste {
		margin-left: 5px;
	}
	.big > svg.newslide {
		margin-top: -3px;
		margin-bottom: 7px;
	}
	.w66 {
		width: 66px;
	}
	.w78 {
		width: 78px;
	}
	.w62 {
		width: 62px;
	}
	.w74 {
		width: 74px;
	}
	.w84 {
		width: 84px;
	}
	.big-label {
		line-height: 22px;
		white-space: nowrap;
	}
	.big-dd {
		height: 22px;
		display: flex;
		align-items: center;
	}
	.big-label.second {
		margin-left: 4px;
	}
	.big-label.pdf {
		letter-spacing: -0.2px;
	}
	.dim {
		color: #a6a6a6;
	}

	.rows {
		display: flex;
		flex-direction: column;
	}
	.row {
		height: 33px;
		display: grid;
		grid-template-columns: var(--ic) auto auto;
		justify-content: start;
		align-items: center;
		white-space: nowrap;
	}
	.shape-rows {
		margin: -1px 0 0 9px;
	}
	.shape-rows .row,
	.g-edit .row {
		height: 31px;
	}
	.g-edit .rows {
		margin: -1px 0 0 11px;
	}

	/* font group */
	.font-row {
		margin: 12px 0 0 5px;
		height: 31px;
		display: flex;
		align-items: center;
		color: #b5b5b5;
	}
	.combo {
		height: 31px;
		box-sizing: border-box;
		border: 1px solid #c8c8c8;
		display: flex;
		justify-content: flex-end;
	}
	.combo.name {
		width: 129px;
		border-right: 0;
	}
	.combo.size {
		width: 68px;
	}
	.drop {
		width: 14px;
		background: #f0f0f0;
		display: flex;
		align-items: center;
		justify-content: center;
	}
	.fbtn {
		width: 29px;
		text-align: center;
		line-height: 31px;
		display: flex;
		align-items: baseline;
		justify-content: center;
		font-family: 'Liberation Sans', sans-serif;
	}
	.fbtn.grow {
		font-size: 25px;
	}
	.fbtn.shrink {
		font-size: 19px;
	}
	.fbtn i {
		width: 0;
		height: 0;
		border-left: 3px solid transparent;
		border-right: 3px solid transparent;
		margin-bottom: 12px;
		flex: none;
	}
	.fbtn .up {
		border-bottom: 4px solid #b5b5b5;
	}
	.fbtn .down {
		border-top: 4px solid #b5b5b5;
	}
	.vsep {
		width: 1px;
		height: 22px;
		background: #dcdcdc;
		flex: none;
	}
	.font-row .vsep {
		margin: 0 0 0 6px;
	}
	.clear {
		margin-left: 12px;
	}
	.style-row {
		margin: 13px 0 0 5px;
		height: 30px;
		display: flex;
		align-items: center;
		color: #b5b5b5;
		font-family: 'Liberation Sans', sans-serif;
		font-size: 21px;
	}
	.style-row b,
	.style-row em,
	.style-row u,
	.style-row s {
		width: 30px;
		text-align: center;
		flex: none;
	}
	.style-row s {
		font-size: 15px;
	}
	.shadowed {
		text-shadow: 1px 1px 1px #ddd;
	}
	.av {
		width: 30px;
		font-size: 16px;
		line-height: 15px;
		display: flex;
		flex-direction: column;
		align-items: center;
		margin-right: 1px;
	}
	.aa {
		margin: 0 2px 0 8px;
		font-size: 21px;
	}
	.style-row .vsep {
		margin: 0 10px 0 9px;
	}
	.color-a {
		font-size: 24px;
		margin-right: 6px;
	}

	/* paragraph group */
	.para-left {
		width: 219px;
		flex: none;
		box-sizing: border-box;
		padding-left: 8px;
	}
	.para-row {
		display: grid;
		align-items: center;
		justify-content: start;
		justify-items: start;
		height: 24px;
	}
	.para-row.one {
		margin-top: 15px;
		grid-template-columns: 28px 16px 28px 16px 10px 30px 30px 10px 27px auto;
	}
	.para-row.two {
		margin: 20px 0 0 1px;
		grid-template-columns: 30px 31px 29px 30px 29px 10px 26px auto;
	}

	/* drawing group */
	.g-draw .body {
		padding-left: 5px;
	}
	.gallery {
		margin-top: 4px;
		width: 204px;
		height: 92px;
		box-sizing: border-box;
		border: 1px solid #c6c6c6;
		display: flex;
		flex: none;
	}
	.gal-scroll {
		flex: 1;
		display: flex;
		flex-direction: column;
		border-left: 1px solid #d8d8d8;
	}
	.gal-scroll span {
		flex: 1;
		display: flex;
		align-items: center;
		justify-content: center;
		border-bottom: 1px solid #d8d8d8;
	}
	.gal-scroll span:last-child {
		border-bottom: 0;
	}
	.gal-scroll .top {
		background: #f0f0f0;
	}
	.gal-scroll .more svg {
		margin-top: 2px;
	}

	.abac {
		width: 24px;
		display: flex;
		flex-direction: column;
		font-size: 14px;
		line-height: 13px;
		letter-spacing: 0.4px;
	}
	.ab {
		color: #6b4a8e;
	}
	.ac {
		color: #2f6ea5;
		margin-left: -1px;
	}
	.ac em {
		font-style: normal;
		font-size: 9px;
	}

	.collapse {
		position: absolute;
		left: 1894px;
		bottom: 9px;
	}

	.workspace {
		height: 766px;
		flex: none;
		display: flex;
		background: #f9f9f9;
	}
	.thumbs {
		width: 291px;
		box-sizing: border-box;
		border-right: 1px solid #c6c6c6;
		padding-top: 28px;
		flex: none;
	}
	.thumb-row {
		display: flex;
	}
	.thumb-row.second {
		margin-top: 27px;
	}
	.num {
		width: 42px;
		flex: none;
		box-sizing: border-box;
		padding-left: 18px;
		font-size: 24px;
		line-height: 20px;
		margin-top: -4px;
		font-family: 'Noto Sans', sans-serif;
	}
	.second .num {
		width: 40px;
		margin-top: 0;
	}
	.num.current {
		color: #b7472a;
	}
	.thumb {
		background: #fff;
		box-sizing: border-box;
	}
	.thumb.first {
		width: 215px;
		height: 123px;
		border: 1px solid #cfcfcf;
		display: flex;
		overflow: hidden;
	}
	.thumb-left {
		width: 44px;
		flex: none;
		border-right: 1px solid #555;
		margin-bottom: 1px;
	}
	.thumb-page {
		flex: 1;
		font-size: 4.6px;
		line-height: 5.800px;
		color: #444;
		padding-left: 9px;
	}
	.q-head {
		height: 22px;
		margin-left: -9px;
		padding-left: 23px;
		display: flex;
		line-height: 12px;
	}
	.pink {
		position: absolute;
		width: 20px;
		height: 14px;
		margin-left: -23px;
		background: #f6e8f8;
	}
	.q-type {
		display: flex;
		justify-content: space-between;
		width: 100px;
		height: 15px;
	}
	.thumb-page p {
		margin: 0 0 10.500px;
		white-space: nowrap;
	}
	.thumb.selected {
		width: 219px;
		height: 126px;
		border: 3px solid #b7472a;
	}

	.editor {
		flex: 1;
		height: 766px;
		box-sizing: border-box;
		padding: 110px 0 0 322px;
		background: #f9f9f9;
		border-bottom: 1px solid #d0d0d0;
	}
	.slide {
		position: relative;
		width: 962px;
		height: 542px;
		box-sizing: border-box;
		background: #fff;
		border: 1px solid #cfcfcf;
		box-shadow: 1px 1px 0 #dcdcdc;
		color: #222;
		font-family: 'Noto Sans CJK SC', sans-serif;
		font-weight: 300;
	}
	.red-frame {
		position: absolute;
		left: 61px;
		top: 21px;
		width: 545px;
		height: 120px;
		box-sizing: border-box;
		border: 11px solid #ff0000;
	}
	.ph {
		position: absolute;
		left: 66px;
		width: 830px;
		box-sizing: border-box;
		border: 1px dashed #7a7a7a;
		padding-left: 7px;
	}
	.title-ph {
		top: 28px;
		height: 108px;
		display: flex;
		align-items: center;
		font-size: 44px;
		padding-bottom: 8px;
	}
	.body-ph {
		top: 143px;
		height: 346px;
		font-size: 27.800px;
		line-height: 34px;
		display: flex;
		align-items: flex-start;
		padding-left: 9px;
	}
	.bullet {
		width: 7px;
		height: 7px;
		border-radius: 50%;
		background: #111;
		margin: 14px 9px 0 0;
		flex: none;
	}
	.ph-icons {
		position: absolute;
		left: 405px;
		top: 267px;
	}

	.vscroll {
		width: 28px;
		flex: none;
		display: flex;
		flex-direction: column;
		align-items: center;
		padding-top: 1px;
		box-sizing: border-box;
	}
	.sbtn {
		width: 25px;
		height: 25px;
		flex: none;
		box-sizing: border-box;
		background: #fff;
		border: 1px solid #d4d4d4;
		display: flex;
		align-items: center;
		justify-content: center;
	}
	.sbtn .tri-up {
		border-bottom-color: #777;
	}
	.big-tri {
		border-left-width: 6px;
		border-right-width: 6px;
		border-top-width: 5px;
	}
	.track {
		width: 25px;
		height: 317px;
		flex: none;
		background: #ebebeb;
	}
	.sthumb {
		width: 25px;
		height: 315px;
		flex: none;
		box-sizing: border-box;
		background: #fff;
		border: 1px solid #ababab;
	}
	.page {
		margin-top: 7px;
	}
	.page + .page {
		margin-top: 12px;
	}

	.statusbar {
		height: 35px;
		flex: none;
		box-sizing: border-box;
		border-top: 2px solid #f9f9f9;
		background: #fff;
		display: flex;
		align-items: center;
		font-size: 18px;
		padding-bottom: 3px;
		box-shadow: inset 0 1px 0 #d6d6d6;
	}
	.pos {
		margin-left: 8px;
		width: 211px;
		flex: none;
		white-space: nowrap;
	}
	.lang {
		margin-left: 19px;
	}
	.status-right {
		margin-left: auto;
		display: flex;
		align-items: center;
		height: 32px;
		margin-bottom: -3px;
	}
	.notes {
		margin-left: 6px;
	}
	.c-ico {
		margin-left: 22px;
	}
	.comments {
		margin-left: 5px;
		margin-right: 23px;
	}
	.view {
		width: 45px;
		height: 100%;
		display: flex;
		align-items: center;
		justify-content: center;
		box-sizing: border-box;
	}
	.view.on {
		background: #d2d2d2;
	}
	.minus {
		margin-left: 6px;
	}
	.slider {
		width: 150px;
		height: 1px;
		margin-left: 5px;
		background: #999;
		position: relative;
		flex: none;
	}
	.knob {
		position: absolute;
		left: 32px;
		top: -10px;
		width: 6px;
		height: 21px;
		background: #777;
	}
	.tick {
		position: absolute;
		left: 75px;
		top: -4px;
		width: 1px;
		height: 9px;
		background: #aaa;
	}
	.plus {
		margin-left: 4px;
	}
	.zoom {
		margin-left: 18px;
		width: 54px;
		flex: none;
	}
	.fit {
		margin-right: 10px;
	}

	.taskbar {
		height: 60px;
		flex: none;
		background: #1a2b33;
		display: flex;
		align-items: center;
		color: #fff;
	}
	.sys {
		width: 72px;
		flex: none;
		display: flex;
		justify-content: center;
	}
	.tb-sep {
		width: 1px;
		height: 36px;
		margin-left: 10px;
		background: #56636a;
		flex: none;
	}
	.tasks {
		height: 60px;
		margin-left: 27px;
		display: flex;
		gap: 14px;
	}
	.task {
		width: 61px;
		height: 60px;
		flex: none;
		box-sizing: border-box;
		border-bottom: 3px solid #76b9ed;
		display: flex;
		align-items: center;
		justify-content: center;
	}
	.task.stacked {
		border-image: linear-gradient(to right, #76b9ed 78%, #4f7f9f 78%) 3;
	}
	.task.active-task {
		width: 73px;
		margin-left: -6px;
		background: #545f66;
	}
	.tb-sep.two {
		margin-left: 484px;
	}
	.ime {
		width: 196px;
		height: 60px;
		margin-left: 19px;
		flex: none;
		box-sizing: border-box;
		padding-top: 3px;
	}
	.ime-row {
		display: flex;
		align-items: center;
		height: 24px;
	}
	.zh {
		margin-left: 6px;
		font-size: 23px;
		line-height: 24px;
	}
	.moon {
		margin-left: 6px;
	}
	.punct {
		margin-left: 13px;
		font-size: 20px;
	}
	.kbd {
		margin-left: 8px;
	}
	.person {
		margin-left: 9px;
	}
	.menu {
		margin-left: 11px;
	}
	.pop {
		margin: 9px 0 0 3px;
	}
	.tray {
		display: grid;
		grid-template-columns: 36px 36px 36px 34px 42px 26px 48px 24px 50px 30px 80px;
		justify-items: center;
		align-items: center;
		flex: none;
	}
	.desk-line {
		width: 1px;
		height: 60px;
		margin-left: 3px;
		background: #5a666d;
	}
</style>
